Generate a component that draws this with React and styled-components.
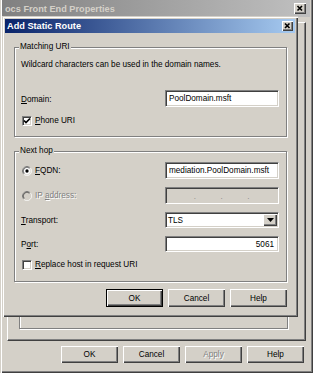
import React from "react";
import styled, { createGlobalStyle } from "styled-components";

const Global = createGlobalStyle`
  html, body { margin: 0; padding: 0; background: #ffffff; }
  body {
    width: 316px; height: 376px; overflow: hidden;
    font-family: "Liberation Sans", Arial, sans-serif;
    font-size: 8.2px; color: #000;
  }
  #root { width: 316px; height: 376px; }
`;

const Screen = styled.div`
  position: relative;
  width: 316px;
  height: 376px;
`;

const Window = styled.div`
  width: 313px;
  height: 373px;
  box-sizing: border-box;
  background: #d4d0c8;
  padding: 0 3px 3px 2px;
  box-shadow: inset 1px 0 0 #d4d0c8, inset 2px 0 0 #ffffff,
    inset -1px -1px 0 #404040, inset -2px -2px 0 #808080;
  display: flex;
  flex-direction: column;
`;

const TitleBar = styled.div`
  height: ${(p) => p.$h}px;
  flex: none;
  display: flex;
  align-items: center;
  justify-content: space-between;
  padding: 0 ${(p) => p.$pr}px 0 ${(p) => p.$pl}px;
  background: ${(p) =>
    p.$active
      ? "linear-gradient(to right, #0a246a, #a6caf0)"
      : "linear-gradient(to right, #808080, #c0c0c0)"};
  color: ${(p) => (p.$active ? "#ffffff" : "#d4d0c8")};
  font-weight: bold;
  font-size: 9.2px;
  white-space: nowrap;
`;

const CloseBtn = styled.div`
  width: ${(p) => p.$w}px;
  height: ${(p) => p.$h}px;
  box-sizing: border-box;
  background: #d4d0c8;
  box-shadow: inset 1px 1px 0 #ffffff, inset -1px -1px 0 #404040,
    inset -2px -2px 0 #808080;
  display: flex;
  align-items: center;
  justify-content: center;
`;

const WindowBody = styled.div`
  flex: 1;
  display: flex;
  flex-direction: column;
  padding: 5px 4px 7px 5px;
`;

const TabPanel = styled.div`
  flex: 1;
  box-sizing: border-box;
  border: 1px solid;
  border-color: #ffffff #404040 #404040 #ffffff;
  box-shadow: inset -1px -1px 0 #808080;
  display: flex;
  flex-direction: column;
  padding: 20px 17px 11px 11px;
`;

const BackGroup = styled.div`
  flex: 1;
  border: 1px solid #808080;
  box-shadow: 1px 1px 0 #ffffff, inset 1px 1px 0 #ffffff;
`;

const ButtonRow = styled.div`
  display: flex;
  justify-content: flex-end;
  gap: 5px;
  margin-top: ${(p) => p.$mt}px;
  padding-right: ${(p) => p.$pr}px;
`;

const Button = styled.button`
  width: 57px;
  height: ${(p) => p.$h || 18}px;
  box-sizing: border-box;
  margin: 0;
  padding: 0;
  background: #d4d0c8;
  font-family: "Liberation Sans", Arial, sans-serif;
  font-size: 8.2px;
  color: ${(p) => (p.disabled ? "#808080" : "#000")};
  text-shadow: ${(p) => (p.disabled ? "1px 1px 0 #ffffff" : "none")};
  border: ${(p) => (p.$default ? "1px solid #000" : "none")};
  box-shadow: inset 1px 1px 0 #ffffff, inset -1px -1px 0 #404040,
    inset -2px -2px 0 #808080;
`;

const Dialog = styled.div`
  position: absolute;
  left: 2px;
  top: 16px;
  width: 296px;
  height: 301px;
  box-sizing: border-box;
  padding: 3px;
  background: #d4d0c8;
  box-shadow: inset 1px 1px 0 #d4d0c8, inset 2px 2px 0 #ffffff,
    inset -1px -1px 0 #404040, inset -2px -2px 0 #808080;
  display: flex;
  flex-direction: column;
`;

const DialogBody = styled.div`
  flex: 1;
  display: flex;
  flex-direction: column;
  padding: 9px 8px 7px 9px;
`;

const Group = styled.fieldset`
  margin: ${(p) => p.$mt || 0}px 0 0 0;
  padding: ${(p) => p.$pt}px 7px 0 6px;
  min-width: 0;
  height: ${(p) => p.$h}px;
  box-sizing: border-box;
  border: 1px solid #808080;
  box-shadow: 1px 1px 0 #ffffff, inset 1px 1px 0 #ffffff;
  display: flex;
  flex-direction: column;
`;

const Legend = styled.legend`
  padding: 0 1px;
  margin-left: -2px;
  line-height: 10px;
  height: 10px;
  background: #d4d0c8;
`;

const Text = styled.div`
  line-height: 10px;
  height: 10px;
  white-space: nowrap;
  margin-top: ${(p) => p.$mt || 0}px;
`;

const Row = styled.div`
  display: flex;
  align-items: center;
  justify-content: space-between;
  height: ${(p) => p.$h || 17}px;
  margin-top: ${(p) => p.$mt || 0}px;
`;

const Choice = styled.label`
  display: flex;
  align-items: center;
  gap: 3px;
  padding-left: ${(p) => p.$pl || 0}px;
  line-height: 10px;
  white-space: nowrap;
  color: ${(p) => (p.$disabled ? "#808080" : "#000")};
  text-shadow: ${(p) => (p.$disabled ? "1px 1px 0 #ffffff" : "none")};
`;

const Label = styled.span`
  white-space: nowrap;
  line-height: 10px;
  margin-top: 2px;
`;

const Field = styled.div`
  width: 114px;
  height: 100%;
  box-sizing: border-box;
  background: ${(p) => (p.$disabled ? "#d4d0c8" : "#ffffff")};
  border: 1px solid;
  border-color: #808080 #ffffff #ffffff #808080;
  box-shadow: inset 1px 1px 0 #404040, inset -1px -1px 0 #d4d0c8;
  display: flex;
  align-items: center;
  justify-content: ${(p) => (p.$right ? "flex-end" : "flex-start")};
  padding: ${(p) => (p.$select ? "1px 1px 1px 2px" : "0 4px 0 3px")};
  white-space: nowrap;
`;

const FieldText = styled.span`
  flex: 1;
`;

const Seg = styled.span`
  flex: 1;
`;

const Dot = styled.span`
  width: 2px;
  color: #808080;
  font-size: 8px;
  line-height: 8px;
  margin-top: 2px;
`;

const DropBtn = styled.div`
  width: 14px;
  height: 100%;
  box-sizing: border-box;
  background: #d4d0c8;
  box-shadow: inset 1px 1px 0 #ffffff, inset -1px -1px 0 #404040,
    inset -2px -2px 0 #808080;
  display: flex;
  align-items: center;
  justify-content: center;
`;

const Box = styled.span`
  width: 10px;
  height: 10px;
  box-sizing: border-box;
  flex: none;
  background: #ffffff;
  border: 1px solid;
  border-color: #808080 #ffffff #ffffff #808080;
  box-shadow: inset 1px 1px 0 #404040, inset -1px -1px 0 #d4d0c8;
  display: flex;
  align-items: center;
  justify-content: center;
`;

const U = styled.u`
  text-decoration-thickness: 1px;
  text-underline-offset: 1px;
`;

const XIcon = ({ w, h }) => (
  <svg width={w} height={h} viewBox={`0 0 ${w} ${h}`}>
    <path
      d={`M${w / 2 - 2.5} ${h / 2 - 2.5} L${w / 2 + 2} ${h / 2 + 2} M${w / 2 + 2} ${h / 2 - 2.5} L${w / 2 - 2.5} ${h / 2 + 2}`}
      stroke="#000"
      strokeWidth="1.6"
      fill="none"
    />
  </svg>
);

const Radio = ({ checked, disabled }) => (
  <svg width="10" height="10" viewBox="0 0 12 12" style={{ flex: "none" }}>
    <circle cx="6" cy="6" r="5" fill={disabled ? "#d4d0c8" : "#ffffff"} />
    <path d="M9.9 2.1 A5.5 5.5 0 0 0 2.1 9.9" stroke="#808080" fill="none" />
    <path d="M9.9 2.1 A5.5 5.5 0 0 1 2.1 9.9" stroke="#ffffff" fill="none" />
    <path d="M9.2 2.8 A4.5 4.5 0 0 0 2.8 9.2" stroke="#404040" fill="none" />
    <path d="M9.2 2.8 A4.5 4.5 0 0 1 2.8 9.2" stroke="#d4d0c8" fill="none" />
    {checked && <circle cx="6" cy="6" r="2" fill="#000" />}
  </svg>
);

const Check = ({ checked }) => (
  <Box>
    {checked && (
      <svg width="8" height="8" viewBox="0 0 8 8">
        <path d="M1 3.5 L3 5.5 L7 1.5" stroke="#000" strokeWidth="1.7" fill="none" />
      </svg>
    )}
  </Box>
);

const Arrow = () => (
  <svg width="7" height="4" viewBox="0 0 7 4">
    <path d="M0 0 H7 L3.5 4 Z" fill="#000" />
  </svg>
);

export default function App() {
  return (
    <Screen>
      <Global />
      <Window>
        <TitleBar $h={17} $pl={3} $pr={4}>
          <span>ocs Front End Properties</span>
          <CloseBtn $w={12} $h={11}>
            <XIcon w={12} h={11} />
          </CloseBtn>
        </TitleBar>
        <WindowBody>
          <TabPanel>
            <BackGroup />
          </TabPanel>
          <ButtonRow $mt={5} $pr={2}>
            <Button $h={17}>OK</Button>
            <Button $h={17}>Cancel</Button>
            <Button $h={17} disabled>
              Apply
            </Button>
            <Button $h={17}>Help</Button>
          </ButtonRow>
        </WindowBody>
      </Window>

      <Dialog>
        <TitleBar $active $h={14} $pl={2} $pr={2}>
          <span>Add Static Route</span>
          <CloseBtn $w={11} $h={10}>
            <XIcon w={11} h={10} />
          </CloseBtn>
        </TitleBar>
        <DialogBody>
          <Group $h={95} $pt={8}>
            <Legend>Matching URI</Legend>
            <Text>Wildcard characters can be used in the domain names.</Text>
            <Row $mt={20}>
              <Label>
                <U>D</U>omain:
              </Label>
              <Field>
                <FieldText>PoolDomain.msft</FieldText>
              </Field>
            </Row>
            <Row $mt={9} $h={10}>
              <Choice $pl={1}>
                <Check checked />
                <span>
                  <U>P</U>hone URI
                </span>
              </Choice>
            </Row>
          </Group>

          <Group $h={136} $pt={6} $mt={9}>
            <Legend>Next hop</Legend>
            <Row>
              <Choice $pl={1}>
                <Radio checked />
                <span>
                  <U>F</U>QDN:
                </span>
              </Choice>
              <Field>
                <FieldText>mediation.PoolDomain.msft</FieldText>
              </Field>
            </Row>
            <Row $mt={8}>
              <Choice $pl={1} $disabled>
                <Radio disabled />
                <span>
                  IP <U>a</U>ddress:
                </span>
              </Choice>
              <Field $disabled>
                <Seg />
                <Dot>.</Dot>
                <Seg />
                <Dot>.</Dot>
                <Seg />
                <Dot>.</Dot>
                <Seg />
              </Field>
            </Row>
            <Row $mt={8} $h={16}>
              <Label>
                <U>T</U>ransport:
              </Label>
              <Field $select>
                <FieldText>TLS</FieldText>
                <DropBtn>
                  <Arrow />
                </DropBtn>
              </Field>
            </Row>
            <Row $mt={8} $h={16}>
              <Label>
                P<U>o</U>rt:
              </Label>
              <Field $right>5061</Field>
            </Row>
            <Row $mt={8} $h={10}>
              <Choice $pl={1}>
                <Check />
                <span>
                  <U>R</U>eplace host in request URI
                </span>
              </Choice>
            </Row>
          </Group>

          <ButtonRow $mt={7} $pr={0}>
            <Button $default>OK</Button>
            <Button>Cancel</Button>
            <Button>Help</Button>
          </ButtonRow>
        </DialogBody>
      </Dialog>
    </Screen>
  );
}
